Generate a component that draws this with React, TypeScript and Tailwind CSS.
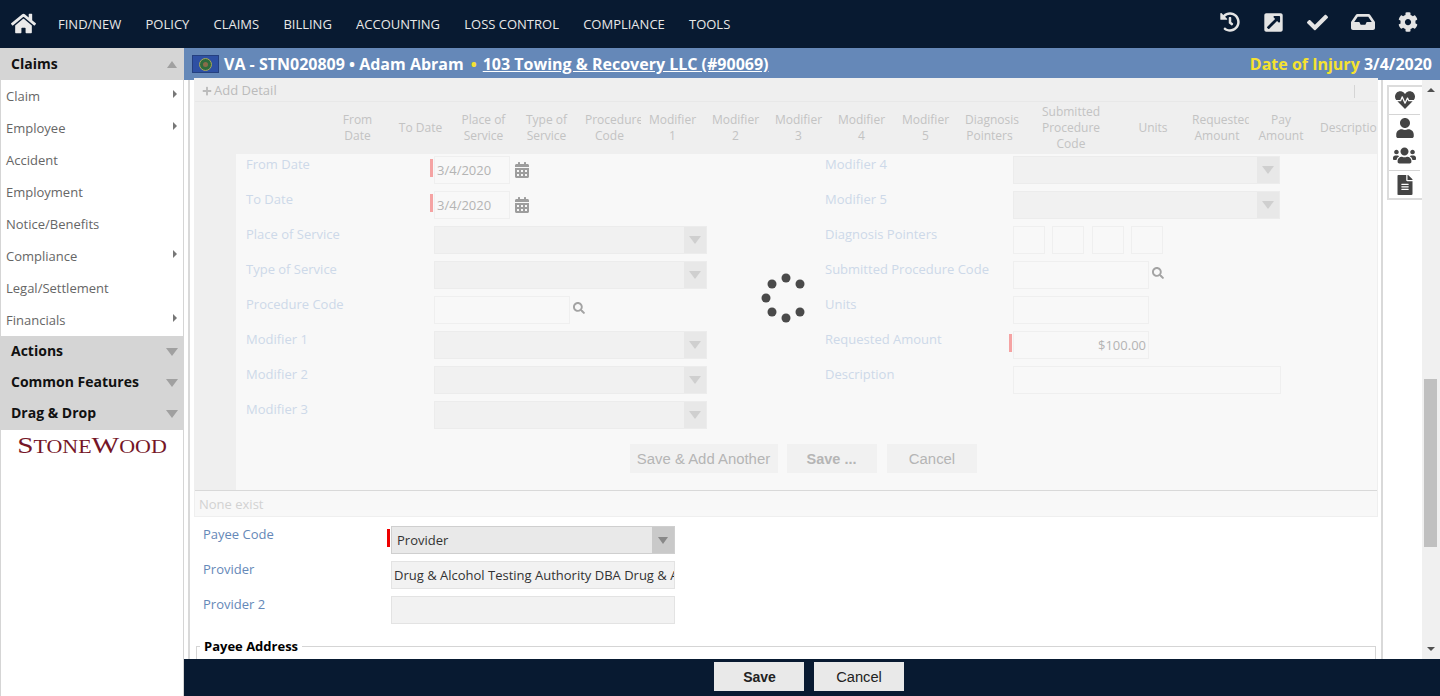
import React from "react";
import { FaHome, FaHistory, FaExternalLinkSquareAlt, FaCheck, FaInbox, FaCog, FaHeartbeat, FaUser, FaUsers, FaFileAlt, FaCalendarAlt, FaSearch, FaPlus } from "react-icons/fa";

const nav = ["FIND/NEW", "POLICY", "CLAIMS", "BILLING", "ACCOUNTING", "LOSS CONTROL", "COMPLIANCE", "TOOLS"];
const menu: [string, boolean][] = [
  ["Claim", true], ["Employee", true], ["Accident", false], ["Employment", false],
  ["Notice/Benefits", false], ["Compliance", true], ["Legal/Settlement", false], ["Financials", true],
];
const cols: [React.ReactNode, number][] = [
  [<>From<br />Date</>, 63], ["To Date", 63], [<>Place of<br />Service</>, 63], [<>Type of<br />Service</>, 63],
  [<>Procedure<br />Code</>, 63], [<>Modifier<br />1</>, 63], [<>Modifier<br />2</>, 63], [<>Modifier<br />3</>, 63],
  [<>Modifier<br />4</>, 63], [<>Modifier<br />5</>, 65], [<>Diagnosis<br />Pointers</>, 63], [<>Submitted<br />Procedure<br />Code</>, 100],
  ["Units", 64], [<>Requested<br />Amount</>, 64], [<>Pay<br />Amount</>, 64], ["Description", 64],
];

function FadedSelect({ w = "w-[273px]" }: { w?: string }) {
  return (
    <div className={`${w} h-[28px] mt-[2px] flex bg-[#f1f1f1] border border-[#ececec]`}>
      <div className="flex-1" />
      <div className="w-[22px] bg-[#e8e8e8] flex items-center justify-center">
        <div className="w-0 h-0 border-x-[6px] border-x-transparent border-t-[8px] border-t-[#cfcfcf]" />
      </div>
    </div>
  );
}
function FadedInput({ w, children, right }: { w: string; children?: React.ReactNode; right?: boolean }) {
  return (
    <div className={`${w} h-[28px] mt-[2px] border border-[#efefef] text-[13px] text-[#b4b4b4] flex items-center px-[2px] pt-[1px] ${right ? "justify-end" : ""}`}>
      {children}
    </div>
  );
}
function Row({ label, marked, children }: { label: string; marked?: boolean; children?: React.ReactNode }) {
  return (
    <div className="h-[35px] flex items-start">
      <div className="w-[188px] text-[13px] leading-[20px] text-[#cdd9e9] relative">
        {label}
        {marked && <div className="absolute right-[1px] top-[5px] w-[3px] h-[18px] bg-[#f5a3a3]" />}
      </div>
      {children}
    </div>
  );
}
function Cal() {
  return <FaCalendarAlt className="text-[#9d9d9d] text-[16px] ml-[4px] mt-[8px]" />;
}
function Mag() {
  return <FaSearch className="text-[#a3a3a3] text-[12px] ml-[3px] mt-[8px]" />;
}

export default function App() {
  return (
    <div className="w-[1440px] h-[696px] overflow-hidden flex flex-col bg-white font-['Open_Sans',sans-serif]">
      <header className="h-[48px] shrink-0 bg-[#081a31] flex items-center pb-[2px] text-[#e8e8e8]">
        <FaHome className="text-[25px] ml-[11px] mr-[22px] text-[#eaeaea]" />
        <nav className="flex gap-[24.2px] text-[13px] mt-[3px]">
          {nav.map((n) => <span key={n}>{n}</span>)}
        </nav>
        <div className="ml-auto flex items-center gap-[23px] pr-[22px] pb-[2px] text-[#e4e4e4]">
          <FaHistory className="text-[20px]" />
          <FaExternalLinkSquareAlt className="text-[21px]" />
          <FaCheck className="text-[21px]" />
          <FaInbox className="text-[24px]" />
          <FaCog className="text-[20px]" />
        </div>
      </header>
      <div className="flex-1 flex min-h-0">
        <aside className="w-[184px] shrink-0 border-r border-[#d5d5d5] border-l border-l-[#d5d5d5] flex flex-col">
          <div className="h-[32px] -ml-[1px] bg-[#d5d5d5] flex items-center justify-between pl-[11px] pr-[6px] text-[14px] font-bold text-[#111]">
            <span className="mb-[2px]">Claims</span>
            <div className="w-0 h-0 border-x-[5px] border-x-transparent border-b-[7px] border-b-[#a0a0a0]" />
          </div>
          {menu.map(([m, sub]) => (
            <div key={m} className="h-[32px] flex items-center justify-between pl-[5px] pr-[6px] text-[13px] text-[#666]">
              <span className="mt-[2px]">{m}</span>
              {sub && <div className="w-0 h-0 -mt-[4px] border-y-[4px] border-y-transparent border-l-[4px] border-l-[#777]" />}
            </div>
          ))}
          <div className="-ml-[1px] bg-[#d5d5d5] pb-[1px]">
            {["Actions", "Common Features", "Drag & Drop"].map((s) => (
              <div key={s} className="h-[31px] flex items-center justify-between pl-[11px] pr-[5px] text-[14px] font-bold text-[#111]">
                <span className="mb-[2px]">{s}</span>
                <div className="w-0 h-0 border-x-[6px] border-x-transparent border-t-[8px] border-t-[#a0a0a0]" />
              </div>
            ))}
          </div>
          <div className="mt-[3px] text-center font-['Liberation_Serif',serif] text-[#751527] leading-[24px] text-[24px] scale-x-[1.22]">
            S<span className="text-[18px]">TONE</span>W<span className="text-[18px]">OOD</span>
          </div>
        </aside>
        <main className="flex-1 min-w-0 flex flex-col">
          <div className="h-[32px] shrink-0 bg-[#6588b8] flex items-center pl-[8px] pr-[8px] text-white text-[16px] font-bold">
            <div className="w-[27px] h-[18px] bg-[#2e50a3] border border-[#25407f] flex items-center justify-center mr-[5px]">
              <div className="w-[13px] h-[13px] rounded-full bg-[#2f6b3c] border border-[#a9a65a] flex items-center justify-center">
                <div className="w-[5px] h-[5px] rounded-full bg-[#8a6b4a]" />
              </div>
            </div>
            <span>VA - STN020809 • Adam Abram</span>
            <span className="ml-[7px] mr-[6px] text-[#f5e22f]">•</span>
            <span className="underline">103 Towing &amp; Recovery LLC (#90069)</span>
            <span className="ml-auto text-[#f5e22f]">Date of Injury <span className="text-white">3/4/2020</span></span>
          </div>
          <div className="flex-1 min-h-0 flex">
            <div className="w-[6px] shrink-0 border-r-2 border-[#d9d9d9]" />
            <div className="w-[1193px] shrink-0 pl-[4px] pr-[4px] overflow-hidden -mt-[2px] relative z-10">
              <section className="relative w-[1184px] h-[439px] border border-[#efefef] bg-[#f8f8f8]">
                <div className="h-[23px] bg-[#efefef] border-b border-[#e8e8e8] flex items-center pl-[7px] pt-[2px] text-[13px] text-[#bbb]">
                  <FaPlus className="text-[10px] mr-[2px]" />Add Detail
                  <div className="ml-auto mr-[22px] w-px h-[13px] bg-[#d5d5d5]" />
                </div>
                <div className="h-[52px] bg-[#efefef] flex pl-[131px] text-[12px] leading-[16px] text-[#c3c3c3] overflow-hidden">
                  {cols.map(([c, w], i) => (
                    <div key={i} style={{ width: w }} className="shrink-0 flex items-center overflow-hidden px-[7px]">
                      <div className="w-full text-center whitespace-nowrap">{c}</div>
                    </div>
                  ))}
                </div>
                <div className="flex h-[337px] border-b border-[#d9d9d9]">
                  <div className="w-[41px] bg-[#efefef] shrink-0" />
                  <div className="flex-1 pl-[10px]">
                    <div className="flex">
                      <div className="w-[579px] shrink-0">
                        <Row label="From Date" marked><FadedInput w="w-[76px]">3/4/2020</FadedInput><Cal /></Row>
                        <Row label="To Date" marked><FadedInput w="w-[76px]">3/4/2020</FadedInput><Cal /></Row>
                        <Row label="Place of Service"><FadedSelect /></Row>
                        <Row label="Type of Service"><FadedSelect /></Row>
                        <Row label="Procedure Code"><FadedInput w="w-[136px]" /><Mag /></Row>
                        <Row label="Modifier 1"><FadedSelect /></Row>
                        <Row label="Modifier 2"><FadedSelect /></Row>
                        <Row label="Modifier 3"><FadedSelect /></Row>
                      </div>
                      <div className="flex-1">
                        <Row label="Modifier 4"><FadedSelect w="w-[267px]" /></Row>
                        <Row label="Modifier 5"><FadedSelect w="w-[267px]" /></Row>
                        <Row label="Diagnosis Pointers">
                          <div className="flex gap-[7px]">
                            <FadedInput w="w-[32px]" /><FadedInput w="w-[32px]" /><FadedInput w="w-[32px] ml-[1px]" /><FadedInput w="w-[32px]" />
                          </div>
                        </Row>
                        <Row label="Submitted Procedure Code"><FadedInput w="w-[136px]" /><Mag /></Row>
                        <Row label="Units"><FadedInput w="w-[136px]" /></Row>
                        <Row label="Requested Amount" marked><FadedInput w="w-[136px]" right>$100.00</FadedInput></Row>
                        <Row label="Description"><FadedInput w="w-[268px]" /></Row>
                      </div>
                    </div>
                    <div className="mt-[10px] flex justify-center gap-[9px] pr-[17px] font-['Liberation_Sans',sans-serif] text-[14.9px] text-[#b5b5b5]">
                      <div className="w-[148px] h-[29px] bg-[#f1f1f1] flex items-center justify-center pt-[1px]">Save &amp; Add Another</div>
                      <div className="w-[90px] h-[29px] bg-[#f1f1f1] flex items-center justify-center pt-[2px] font-bold text-[14.5px]">Save ...</div>
                      <div className="w-[90px] h-[29px] ml-[1px] pl-[1px] bg-[#f1f1f1] flex items-center justify-center pt-[1px]">Cancel</div>
                    </div>
                  </div>
                </div>
                <div className="h-[26px] flex items-center pl-[4px] pt-[2px] text-[13px] text-[#d2d2d2]">None exist</div>
                <div className="absolute inset-0 flex items-center justify-center pointer-events-none">
                  <svg width="50" height="50" viewBox="0 0 50 50" fill="#4a4a4a">
                    <circle cx="25" cy="5" r="4.5" /><circle cx="39" cy="11" r="4.5" /><circle cx="39" cy="39" r="4.5" />
                    <circle cx="25" cy="45" r="4.5" /><circle cx="11" cy="39" r="4.5" /><circle cx="5" cy="25" r="4.5" /><circle cx="11" cy="11" r="4.5" />
                  </svg>
                </div>
              </section>
              <div className="pl-[9px] pt-[7px] text-[13px]">
                <div className="h-[35px] flex items-start">
                  <div className="w-[188px] text-[#6588b8] leading-[20px]">Payee Code</div>
                  <div className="relative mt-[2px] w-[284px] h-[28px] bg-[#e9e9e9] border border-[#cfcfcf] flex items-center pl-[5px] pt-[1px] text-[#333]">
                    Provider
                    <div className="absolute -left-[5px] top-[2px] w-[3px] h-[18px] bg-[#ee0000]" />
                    <div className="absolute right-0 inset-y-0 w-[22px] bg-[#c9c9c9] flex items-center justify-center">
                      <div className="w-0 h-0 border-x-[5px] border-x-transparent border-t-[7px] border-t-[#888]" />
                    </div>
                  </div>
                </div>
                <div className="h-[35px] flex items-start">
                  <div className="w-[188px] text-[#6588b8] leading-[20px]">Provider</div>
                  <div className="mt-[2px] w-[284px] h-[28px] bg-[#f2f2f2] border border-[#e3e3e3] flex items-center pl-[2px] pt-[1px] text-[#333] overflow-hidden whitespace-nowrap">
                    Drug &amp; Alcohol Testing Authority DBA Drug &amp; Alcohol
                  </div>
                </div>
                <div className="h-[35px] flex items-start">
                  <div className="w-[188px] text-[#6588b8] leading-[20px]">Provider 2</div>
                  <div className="mt-[2px] w-[284px] h-[28px] bg-[#f2f2f2] border border-[#e3e3e3]" />
                </div>
              </div>
              <fieldset className="ml-[2px] mt-[10px] w-[1180px] h-[40px] border border-[#d5d5d5] pl-[3px]">
                <legend className="px-[4px] text-[13px] font-bold text-black leading-[14px]">Payee Address</legend>
              </fieldset>
            </div>
            <div className="w-[2px] -ml-[2px] shrink-0 bg-[#d9d9d9] relative" />
            <div className="flex-1 flex justify-between bg-white">
              <div className="w-[39px] pl-[4px] pt-[5px]">
                <div className="w-[35px] h-[115px] border-2 border-r-0 border-[#dcdcdc] flex flex-col items-center pr-[2px] text-[#444]">
                  <div className="h-[28px] w-[31px] border-b border-[#d5d5d5] flex items-center justify-center pb-[1px]"><FaHeartbeat className="text-[20px]" /></div>
                  <div className="h-[26px] flex items-center justify-center"><FaUser className="text-[20px]" /></div>
                  <div className="h-[30px] w-[31px] border-b border-[#d5d5d5] flex items-center justify-center"><FaUsers className="text-[23px]" /></div>
                  <div className="flex-1 flex items-center justify-center"><FaFileAlt className="text-[20px]" /></div>
                </div>
              </div>
              <div className="w-[18px] bg-[#f0f0f0] flex flex-col items-center justify-between py-[8px] relative">
                <div className="w-0 h-0 border-x-[4px] border-x-transparent border-b-[4px] border-b-[#505050]" />
                <div className="absolute left-[2px] top-[299px] w-[13px] h-[168px] bg-[#c0c0c0]" />
                <div className="w-0 h-0 border-x-[4px] border-x-transparent border-t-[4px] border-t-[#505050]" />
              </div>
            </div>
          </div>
          <footer className="h-[37px] shrink-0 bg-[#081a31] flex items-center justify-center gap-[10px] pr-[6px] pb-[2px] font-['Liberation_Sans',sans-serif] text-[14.7px] text-[#222] relative z-20">
            <div className="w-[90px] h-[29px] pl-[1px] bg-[#e9e9e9] flex items-center justify-center pt-[2px] font-bold text-[14px]">Save</div>
            <div className="w-[90px] h-[29px] bg-[#e9e9e9] flex items-center justify-center pt-[2px]">Cancel</div>
          </footer>
        </main>
      </div>
    </div>
  );
}
